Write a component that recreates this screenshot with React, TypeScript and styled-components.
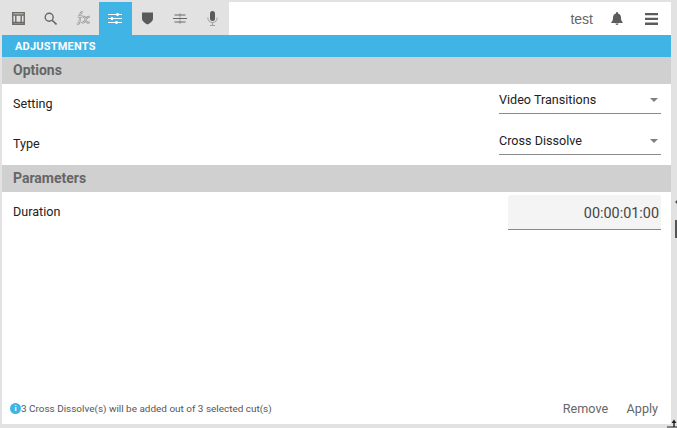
import styled, { createGlobalStyle } from "styled-components";

const GlobalStyle = createGlobalStyle`
  html, body {
    margin: 0;
    padding: 0;
    background: #e2e2e2;
  }
`;

const FX_PATH =
  "M7 1.500C5.200.7 4.400 2 4.200 4L3.600 10.500C3.400 12.500 2.300 13.200 1 12.300M1.800 5.500H6.500M6.800 6C8.600 5.200 9.200 6.500 9.800 8.500L10.300 10.300C10.700 11.800 12 12.300 13.500 11M13.800 6.200C12.200 5 11 6.500 9.800 8.300L8.400 10.500C7.500 11.900 6.500 12 5.700 11";

const Icons = [
  <svg width="13" height="13" viewBox="0 0 13 13" key="film">
    <path d="M.75.75h11.500v11.500H.75zM.75 3h11.500M.75 10.500h11.500M3.800 3v7.500M9.200 3v7.500" fill="none" stroke="#6e6a66" strokeWidth="1.400" />
  </svg>,
  <svg width="13" height="13" viewBox="0 0 13 13" key="search">
    <circle cx="5.200" cy="5.200" r="4" fill="none" stroke="#666" strokeWidth="1.400" />
    <path d="M8.200 8.200l4.300 4.300" stroke="#666" strokeWidth="1.600" />
  </svg>,
  <svg width="14" height="15" viewBox="0 0 14 15" key="fx">
    <path d={FX_PATH} fill="none" stroke="#8a8a8a" strokeWidth="1.900" />
    <path d={FX_PATH} fill="none" stroke="#e2e2e2" strokeWidth="0.800" />
  </svg>,
  <svg width="14" height="11" viewBox="0 0 14 11" key="sliders">
    <path d="M0 1.500h14M0 5.500h14M0 9.500h14" stroke="#fff" strokeWidth="1.200" />
    <path d="M9.500 0v3M4 4v3M8.500 8v3" stroke="#fff" strokeWidth="2" />
  </svg>,
  <svg width="11" height="13" viewBox="0 0 11 13" key="shield">
    <path d="M0 .5h11v6.200c0 2.300-3 4.400-5.500 5.800C3 11.100 0 9 0 6.700z" fill="#5a5a5a" />
  </svg>,
  <svg width="14" height="11" viewBox="0 0 14 11" key="lines">
    <path d="M7 0v11" stroke="#b5b5b5" strokeWidth="1.400" />
    <path d="M1.500 2h11M0 5.500h14M1.500 9h11" stroke="#666" strokeWidth="1" />
  </svg>,
  <svg width="13" height="15" viewBox="0 0 13 15" key="mic">
    <rect x="4" y="0" width="5" height="10" rx="2.500" fill="#5a5a5a" />
    <path d="M1.800 6.500c0 3.300 2 5 4.700 5s4.700-1.700 4.700-5M6.500 11.500V14.500M4 14.500h5" fill="none" stroke="#a0a0a0" strokeWidth="1" />
  </svg>,
];

export default function App() {
  return (
    <>
      <GlobalStyle />
      <Page>
        <Panel>
          <TopBar>
            <Tabs>
              {Icons.map((icon, i) => (
                <Tab key={i} $active={i === 3}>
                  {icon}
                </Tab>
              ))}
            </Tabs>
            <UserArea>
              <UserName>test</UserName>
              <BellIcon width="12" height="13" viewBox="0 0 12 13">
                <path d="M6 0a1 1 0 0 1 1 1v.6c2 .5 3 2.100 3 4.100 0 2.300.6 3.400 1.700 4.500v.8H.3v-.8C1.400 9.100 2 8 2 5.700c0-2 1-3.600 3-4.100V1a1 1 0 0 1 1-1zM4.400 11.600h3.200a1.600 1.400 0 0 1-3.200 0z" fill="#5c5c5c" />
              </BellIcon>
              <svg width="13" height="12" viewBox="0 0 13 12">
                <path d="M0 0h13v2.300H0zM0 4.800h13v2.300H0zM0 9.600h13v2.300H0z" fill="#5c5c5c" />
              </svg>
            </UserArea>
          </TopBar>
          <TitleBar>ADJUSTMENTS</TitleBar>
          <SectionHeader>Options</SectionHeader>
          <FieldRow $height={41} $labelTop={12}>
            <Label>Setting</Label>
            <Select>Video Transitions</Select>
          </FieldRow>
          <FieldRow $height={40} $labelTop={11}>
            <Label>Type</Label>
            <Select>Cross Dissolve</Select>
          </FieldRow>
          <SectionHeader>Parameters</SectionHeader>
          <DurationRow>
            <Label>Duration</Label>
            <TimeInput>00:00:01:00</TimeInput>
          </DurationRow>
          <Footer>
            <Info>
              <InfoDot>i</InfoDot>3 Cross Dissolve(s) will be added out of 3 selected cut(s)
            </Info>
            <Actions>
              <ActionButton>Remove</ActionButton>
              <ActionButton>Apply</ActionButton>
            </Actions>
          </Footer>
        </Panel>
        <EdgeChevron />
        <EdgeThumb />
        <CornerArrow>
          <svg width="10" height="10" viewBox="0 0 10 10">
            <path d="M7 1.500L9.500 5H7.700V8.500H6.300V5H4.500zM0 8.500h10V9.500H0z" fill="#222" />
          </svg>
        </CornerArrow>
      </Page>
    </>
  );
}

const Page = styled.div`
  position: relative;
  box-sizing: border-box;
  width: 677px;
  height: 428px;
  padding: 2px 6px 4px 2px;
  overflow: hidden;
  font-family: Roboto, "Liberation Sans", sans-serif;
`;

const Panel = styled.div`
  display: flex;
  flex-direction: column;
  height: 100%;
  background: #fff;
`;

const TopBar = styled.div`
  display: flex;
  justify-content: space-between;
  height: 33px;
`;

const Tabs = styled.div`
  display: grid;
  grid-template-columns: repeat(7, 1fr);
  width: 227px;
  background: #e2e2e2;
`;

const Tab = styled.div<{ $active?: boolean }>`
  display: flex;
  align-items: center;
  justify-content: center;
  background: ${(p) => (p.$active ? "#3fb4e5" : "transparent")};
`;

const UserArea = styled.div`
  display: flex;
  align-items: center;
  padding-right: 13px;
`;

const UserName = styled.span`
  margin-right: 18px;
  font-family: "Liberation Sans", Arial, sans-serif;
  font-size: 14px;
  color: #666;
`;

const BellIcon = styled.svg`
  margin-right: 22px;
`;

const TitleBar = styled.div`
  height: 22px;
  padding-left: 13px;
  background: #3fb4e5;
  color: #fff;
  font-size: 11px;
  font-weight: 700;
  letter-spacing: 0.2px;
  line-height: 23px;
`;

const SectionHeader = styled.div`
  height: 27px;
  padding-left: 11px;
  background: #d0d0d0;
  color: #666;
  font-size: 14px;
  font-weight: 700;
  line-height: 27px;
`;

const Label = styled.span`
  font-size: 12.600px;
  line-height: 15px;
  color: #222;
`;

const FieldRow = styled.div<{ $height: number; $labelTop: number }>`
  display: flex;
  justify-content: space-between;
  align-items: flex-start;
  height: ${(p) => p.$height}px;
  padding: 0 10px 0 11px;
  ${Label} {
    padding-top: ${(p) => p.$labelTop}px;
  }
`;

const Select = styled.div`
  position: relative;
  box-sizing: border-box;
  width: 162px;
  height: 30px;
  padding-top: 8px;
  border-bottom: 1px solid #8a8a8a;
  font-size: 12.600px;
  line-height: 16px;
  color: #222;
  &::after {
    content: "";
    position: absolute;
    right: 3px;
    top: 14px;
    border-left: 4.500px solid transparent;
    border-right: 4.500px solid transparent;
    border-top: 4px solid #808080;
  }
`;

const DurationRow = styled.div`
  display: flex;
  justify-content: space-between;
  align-items: flex-start;
  flex: 1;
  padding: 3px 10px 0 11px;
  ${Label} {
    padding-top: 9px;
  }
`;

const TimeInput = styled.div`
  box-sizing: border-box;
  width: 153px;
  height: 35px;
  padding: 11px 2px 0 0;
  background: #f4f4f4;
  border-bottom: 1px solid #8a8a8a;
  border-radius: 3px 3px 0 0;
  font-size: 14.400px;
  line-height: 16px;
  text-align: right;
  color: #444;
`;

const Footer = styled.div`
  display: flex;
  justify-content: space-between;
  align-items: center;
  height: 32px;
  padding: 0 13px 0 8px;
`;

const Info = styled.div`
  display: flex;
  align-items: center;
  font-size: 9.950px;
  color: #555;
`;

const InfoDot = styled.span`
  display: inline-flex;
  align-items: center;
  justify-content: center;
  width: 11px;
  height: 11px;
  border-radius: 50%;
  background: #3fb4e5;
  color: #fff;
  font-size: 8px;
  font-weight: 700;
`;

const Actions = styled.div`
  display: flex;
  gap: 18.500px;
`;

const ActionButton = styled.span`
  font-size: 12.600px;
  color: #666;
`;

const EdgeChevron = styled.div`
  position: absolute;
  right: 0;
  top: 200px;
  border-top: 2px solid transparent;
  border-bottom: 2px solid transparent;
  border-right: 2px solid #555;
`;

const EdgeThumb = styled.div`
  position: absolute;
  right: 0;
  top: 220px;
  width: 2px;
  height: 18px;
  background: #555;
`;

const CornerArrow = styled.div`
  position: absolute;
  right: 0;
  bottom: 0;
  display: flex;
`;
